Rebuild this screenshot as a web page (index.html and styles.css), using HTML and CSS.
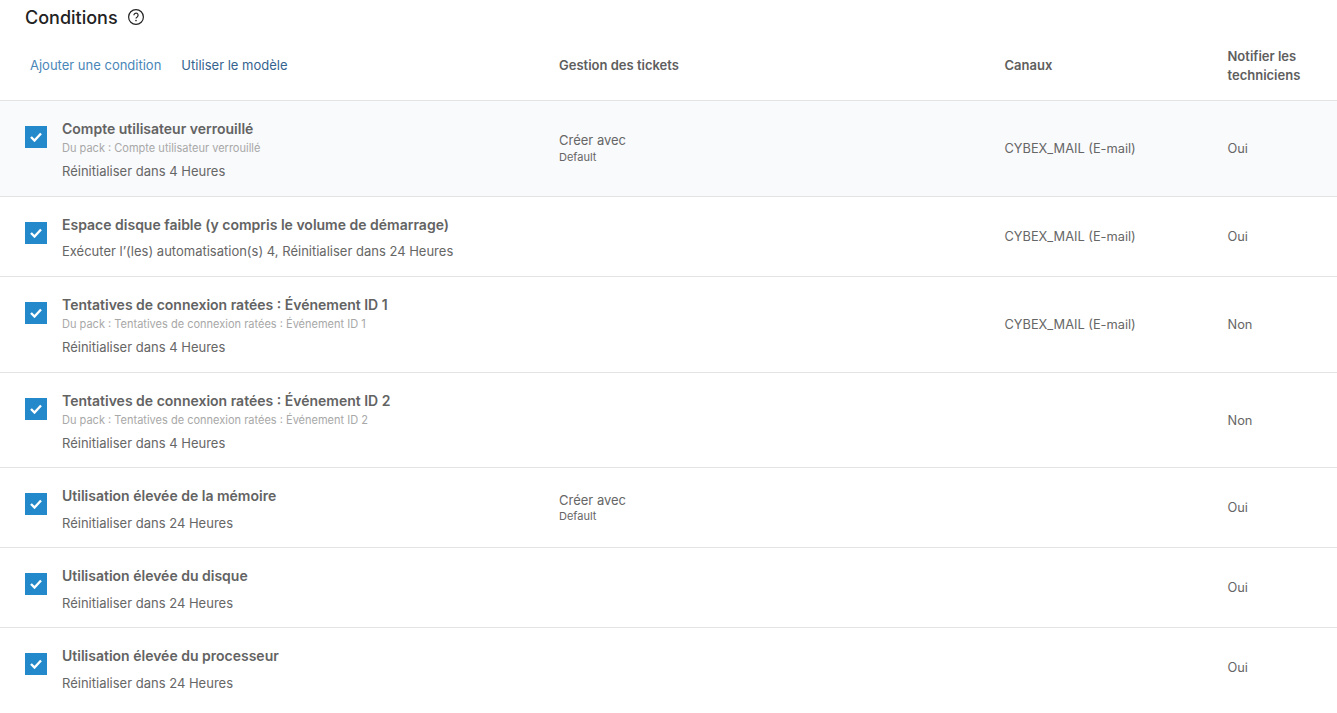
FILE: index.html
```html
<!DOCTYPE html>
<html lang="fr">
<head>
<meta charset="utf-8">
<title>Conditions</title>
<link rel="stylesheet" href="styles.css">
</head>
<body>
<div class="title-bar"><h1 class="title">Conditions</h1>
<svg class="help" width="18" height="18" viewBox="0 0 18 18"><circle cx="9" cy="9" r="7.4" fill="none" stroke="#222" stroke-width="1.2"/><path d="M6.9 7.2a2.1 2.1 0 1 1 3.3 1.7c-.8.5-1.2.9-1.2 1.7" fill="none" stroke="#222" stroke-width="1.2"/><circle cx="9" cy="12.6" r=".8" fill="#222"/></svg></div>
<div class="row head">
  <div class="c-main links"><a class="link-a">Ajouter une condition</a><a class="link-b">Utiliser le modèle</a></div>
  <div class="c-ticket th">Gestion des tickets</div>
  <div class="c-chan th">Canaux</div>
  <div class="c-notif th">Notifier les techniciens</div>
</div>
<div class="row tall hl">
  <div class="c-main"><span class="cb"><svg width="12" height="10" viewBox="0 0 12 10"><path d="M1 5l3.5 3.5L11 1.5" fill="none" stroke="#fff" stroke-width="2.4"/></svg></span><div class="info"><div class="name">Compte utilisateur verrouillé</div><div class="pack">Du pack : Compte utilisateur verrouillé</div><div class="desc">Réinitialiser dans 4 Heures</div></div></div>
  <div class="c-ticket"><div class="val">Créer avec</div><div class="sub">Default</div></div>
  <div class="c-chan val">CYBEX_MAIL (E-mail)</div>
  <div class="c-notif val">Oui</div>
</div>
<div class="row short">
  <div class="c-main"><span class="cb"><svg width="12" height="10" viewBox="0 0 12 10"><path d="M1 5l3.5 3.5L11 1.5" fill="none" stroke="#fff" stroke-width="2.4"/></svg></span><div class="info"><div class="name">Espace disque faible (y compris le volume de démarrage)</div><div class="desc gap">Exécuter l’(les) automatisation(s) 4, Réinitialiser dans 24 Heures</div></div></div>
  <div class="c-ticket"></div>
  <div class="c-chan val">CYBEX_MAIL (E-mail)</div>
  <div class="c-notif val">Oui</div>
</div>
<div class="row tall">
  <div class="c-main"><span class="cb"><svg width="12" height="10" viewBox="0 0 12 10"><path d="M1 5l3.5 3.5L11 1.5" fill="none" stroke="#fff" stroke-width="2.4"/></svg></span><div class="info"><div class="name">Tentatives de connexion ratées : Événement ID 1</div><div class="pack">Du pack : Tentatives de connexion ratées : Événement ID 1</div><div class="desc">Réinitialiser dans 4 Heures</div></div></div>
  <div class="c-ticket"></div>
  <div class="c-chan val">CYBEX_MAIL (E-mail)</div>
  <div class="c-notif val">Non</div>
</div>
<div class="row tall">
  <div class="c-main"><span class="cb"><svg width="12" height="10" viewBox="0 0 12 10"><path d="M1 5l3.5 3.5L11 1.5" fill="none" stroke="#fff" stroke-width="2.4"/></svg></span><div class="info"><div class="name">Tentatives de connexion ratées : Événement ID 2</div><div class="pack">Du pack : Tentatives de connexion ratées : Événement ID 2</div><div class="desc">Réinitialiser dans 4 Heures</div></div></div>
  <div class="c-ticket"></div>
  <div class="c-chan val"></div>
  <div class="c-notif val">Non</div>
</div>
<div class="row short">
  <div class="c-main"><span class="cb"><svg width="12" height="10" viewBox="0 0 12 10"><path d="M1 5l3.5 3.5L11 1.5" fill="none" stroke="#fff" stroke-width="2.4"/></svg></span><div class="info"><div class="name">Utilisation élevée de la mémoire</div><div class="desc gap">Réinitialiser dans 24 Heures</div></div></div>
  <div class="c-ticket"><div class="val">Créer avec</div><div class="sub">Default</div></div>
  <div class="c-chan val"></div>
  <div class="c-notif val">Oui</div>
</div>
<div class="row short">
  <div class="c-main"><span class="cb"><svg width="12" height="10" viewBox="0 0 12 10"><path d="M1 5l3.5 3.5L11 1.5" fill="none" stroke="#fff" stroke-width="2.4"/></svg></span><div class="info"><div class="name">Utilisation élevée du disque</div><div class="desc gap">Réinitialiser dans 24 Heures</div></div></div>
  <div class="c-ticket"></div>
  <div class="c-chan val"></div>
  <div class="c-notif val">Oui</div>
</div>
<div class="row short last">
  <div class="c-main"><span class="cb"><svg width="12" height="10" viewBox="0 0 12 10"><path d="M1 5l3.5 3.5L11 1.5" fill="none" stroke="#fff" stroke-width="2.4"/></svg></span><div class="info"><div class="name">Utilisation élevée du processeur</div><div class="desc gap">Réinitialiser dans 24 Heures</div></div></div>
  <div class="c-ticket"></div>
  <div class="c-chan val"></div>
  <div class="c-notif val">Oui</div>
</div>
</body>
</html>
```
FILE: styles.css
```css
* { box-sizing: border-box; }
html, body { margin: 0; padding: 0; background: #fff; overflow: hidden; }
body { font-family: Inter, "Liberation Sans", sans-serif; color: #555; font-size: 13px; height: 713px; }
.title-bar { display: flex; align-items: center; gap: 9px; height: 34px; padding-left: 25px; }
.title { margin: 0; font-size: 18px; font-weight: 500; color: #222; line-height: 34px; padding-top: 1px; }
.help { display: block; }
.row { display: grid; grid-template-columns: 559px 445.5px 223px 1fr; align-items: center; border-bottom: 1px solid #e3e3e3; }
.head { height: 67.45px; padding-bottom: 4px; }
.head .c-notif { padding-top: 2px; }
.tall { height: 95.66px; padding-bottom: 1px; }
.short { height: 80px; padding-bottom: 1px; }
.last { border-bottom-color: transparent; }
.hl { background: #f9fafc; }
.c-main { display: flex; align-items: flex-start; padding-left: 25px; }
.links { padding-left: 30px; gap: 20px; align-items: center; }
.link-a { color: #4a86b8; font-size: 13px; }
.link-b { color: #35638f; font-size: 13px; }
.th { font-size: 13px; font-weight: 600; color: #5e5e5e; line-height: 19px; }
.c-notif { padding-right: 30px; }
.cb { flex: none; width: 22px; height: 22px; background: #2389ca; display: flex; align-items: center; justify-content: center; margin-top: 4px; }
.info { margin-left: 15px; }
.name { font-size: 14px; font-weight: 600; color: #636363; line-height: 20px; margin-top: -3px; }
.pack { font-size: 11.03px; color: #a8a8a8; line-height: 16px; margin-top: 1px; }
.desc { font-size: 13px; color: #666; line-height: 18px; margin-top: 6px; margin-bottom: -6px; }
.desc.gap { margin-top: 7.7px; margin-bottom: -5.7px; }
.val { font-size: 12.8px; color: #666; line-height: 18px; }
.c-chan.val, .c-notif.val { padding-top: 2px; }
.tall .c-ticket, .short .c-ticket { margin-bottom: 0.8px; }
.c-ticket .val { font-size: 13px; margin-bottom: 0.8px; }
.sub { font-size: 11px; color: #666; line-height: 14px; }
```
